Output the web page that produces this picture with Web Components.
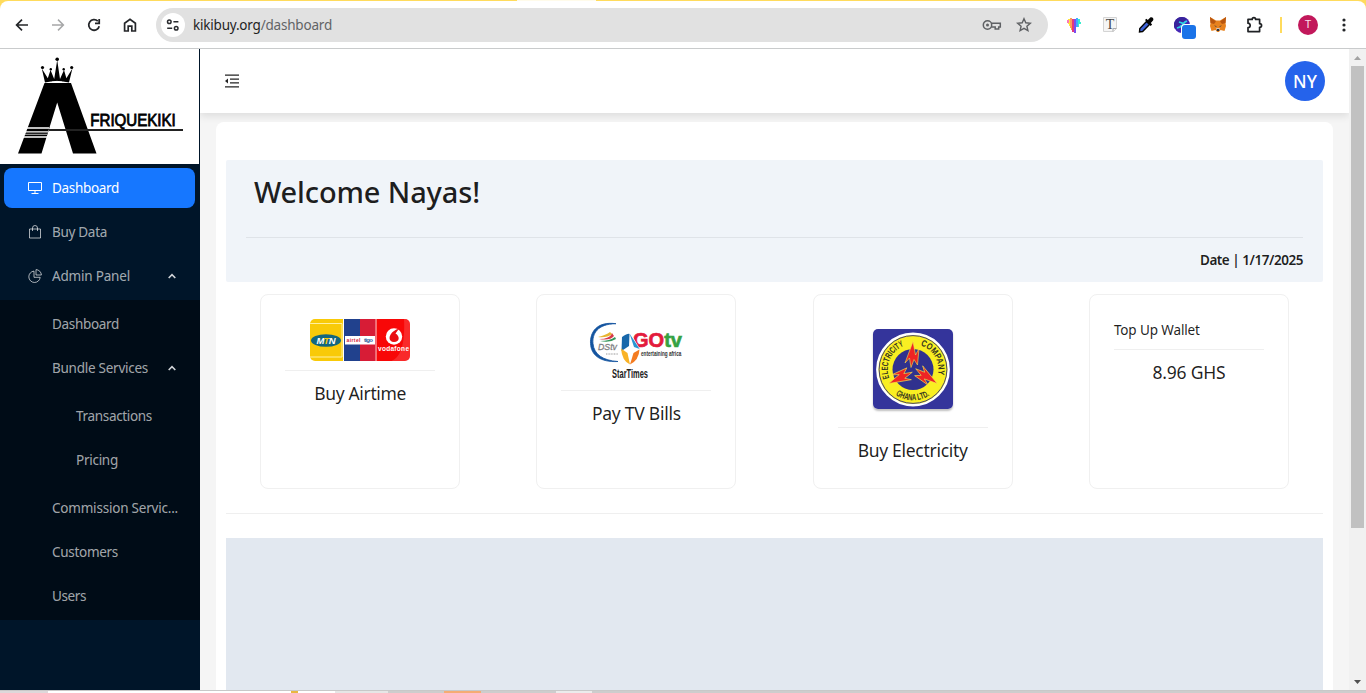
<!DOCTYPE html>
<html lang="en">
<head>
<meta charset="utf-8">
<title>Afriquekiki dashboard</title>
<style>
html,body{margin:0;height:100%;overflow:hidden}
body{font-family:"Noto Sans","Open Sans",sans-serif;font-size:13.5px;color:rgba(0,0,0,.88);background:#fff}
</style>
</head>
<body>
<app-window></app-window>
<script>
const define = (name, html, setup) => {
  const tpl = document.createElement('template');
  tpl.innerHTML = html;
  customElements.define(name, class extends HTMLElement {
    constructor() {
      super();
      this.attachShadow({mode: 'open'}).append(tpl.content.cloneNode(true));
    }
    connectedCallback() { if (setup) setup(this, this.shadowRoot); }
  });
};

/* A label whose tracking is adjusted so that it takes the width given in "w". */
define('fit-text', `<style>:host{display:inline-block;white-space:nowrap;line-height:1.5}span{display:inline-block}</style><span><slot></slot></span>`, (el, root) => {
  requestAnimationFrame(() => {
    const span = root.querySelector('span'), w = +el.getAttribute('w');
    if (!w) return;
    const gap = (w - span.getBoundingClientRect().width) / el.textContent.length;
    span.style.letterSpacing = gap + 'px';
  });
});

define('browser-bar', `
<style>
:host{display:block;height:49px;box-sizing:border-box;background:linear-gradient(90deg,#ffdb5c 517px,#fffbea 517px 596px,#ffdb5c 596px);padding-top:1px}
.bar{height:48px;box-sizing:border-box;background:#fff;border-radius:8px 8px 0 0;border-bottom:1px solid #c9cbcc;display:flex;align-items:center}
.nav{display:flex;width:156px;padding-left:4px;box-sizing:border-box}
.c{width:36px;display:flex;justify-content:center;align-items:center;flex:none}
.url{width:892px;height:34px;border-radius:17px;background:#e1e1e1;display:flex;align-items:center;box-sizing:border-box;padding:0 8px 0 5px;color:#1f1f1f;margin-right:8px}
.url fit-text{padding-top:2px}
.site{width:24px;height:24px;border-radius:50%;background:#fff;display:flex;align-items:center;justify-content:center;margin-right:8px}
.url .end{margin-left:auto;display:flex}.url .end div{width:32px;display:flex;justify-content:center}
.path{color:#626466}
.t{width:20px;height:20px;border-radius:50%;background:#c2185b;color:#f8dfe8;font:11px/20px Roboto,sans-serif;text-align:center}
.sep{width:18px;display:flex;justify-content:center}.sep i{width:2px;height:16px;background:#ffdb5c}
.badge{position:relative}.badge i{position:absolute;left:8px;top:8px;width:14px;height:14px;border-radius:3px;background:#1a73e8;box-shadow:0 0 0 1px #fff}
svg{display:block}
</style>
<div class="bar">
 <div class="nav">
  <div class="c"><svg width="16" height="16" fill="none" stroke="#242629" stroke-width="1.7"><path d="M14 8H3M8 2.6 2.6 8 8 13.4"/></svg></div>
  <div class="c"><svg width="16" height="16" fill="none" stroke="#a6a7a8" stroke-width="1.5"><path d="M2 8h11M8 2.6 13.4 8 8 13.4"/></svg></div>
  <div class="c"><svg width="16" height="16" fill="none" stroke="#242629" stroke-width="1.8"><path d="M13.2 9.2a5.3 5.3 0 1 1-1.4-5"/><path d="M9 6.4h4.2V2"/></svg></div>
  <div class="c"><svg width="16" height="16" fill="none" stroke="#242629" stroke-width="1.7"><path d="M2.6 14V6.2L8 2.2l5.4 4V14H9.8V9.2H6.2V14Z"/></svg></div>
 </div>
 <div class="url">
  <div class="site"><svg width="14" height="12" fill="none" stroke="#2a2c2f" stroke-width="1.5"><circle cx="3.3" cy="2.7" r="1.8"/><path d="M7.4 2.7h5M1.2 9.2h5"/><circle cx="10.2" cy="9.2" r="1.8"/></svg></div>
  <fit-text w="139">kikibuy.org<span class="path">/dashboard</span></fit-text>
  <div class="end">
   <div><svg width="20" height="16" fill="none" stroke="#5f6164" stroke-width="1.5"><circle cx="5.5" cy="8" r="4.2"/><path d="M9.3 6.2h9v3.7h-1.6v2h-3.5v-2H9.4"/><circle cx="5.5" cy="8" r="1.5" fill="#5f6164" stroke="none"/></svg></div>
   <div><svg width="16" height="16" fill="none" stroke="#5f6164" stroke-width="1.4"><path d="m8 1.7 1.8 4.1 4.5.4-3.4 3 1 4.4L8 11.3l-3.9 2.3 1-4.4-3.4-3 4.5-.4z"/></svg></div>
  </div>
 </div>
 <div class="c"><svg width="14" height="16"><path d="M1 2h3v7H2V7H1z" fill="#ffe23b"/><path d="M0 3h2v3H0z" fill="#ff77b9"/><path d="M3 1h2v10H3z" fill="#ff9a5c"/><path d="M5 2h2v13H5z" fill="#e4387d"/><path d="M7 2h2v14H7z" fill="#784ff0"/><path d="M9 1h2v9H9z" fill="#3fa9ff"/><path d="M11 2h2v3h1v2h-2v3h-1z" fill="#35edcf"/><path d="M4 9h1v4H4z" fill="#ffa23b"/></svg></div>
 <div class="c"><svg width="14" height="16"><path d="M.5.5h13v11l-3 3H.5z" fill="#f5f5f5" stroke="#d4d4d4"/><path d="M10 14.5v-3h3.5" fill="none" stroke="#aaa"/><text x="7" y="12" text-anchor="middle" font-family="Liberation Serif,serif" font-size="14" fill="#444">T</text></svg></div>
 <div class="c"><svg width="16" height="16"><path d="m8.5 4.5 3 3L4.6 14.5 1.5 15l.3-3.4z" fill="#3f63d8" stroke="#050505" stroke-width="1.4"/><path d="m7 3 1.4-1.2 1.4 1.3L12 .8c2-1.5 4.3.8 3 2.8L12.8 6l1.3 1.5L12.7 9z" fill="#050505"/></svg></div>
 <div class="c"><div class="badge"><svg width="16" height="16"><circle cx="8" cy="8" r="8" fill="#4527b5"/><path d="M8 0a8 8 0 0 0-7 12l12-10a8 8 0 0 0-5-2" fill="#38239b"/><path d="m3 11 3-1 5-5 2-1M5 5l3 1 2 3" fill="none" stroke="#2cd4e4" stroke-width="1.8"/></svg><i></i></div></div>
 <div class="c"><svg width="16" height="15"><path d="M0 0 6 3.4h4L16 0l-.5 6 .5 3-1.5 5-4-1-1.6 2H7.1l-1.6-2-4 1L0 9l.5-3z" fill="#e8821e"/><path d="m0 0 6 4.4L4 7 .5 6zM16 0l-6 4.4L12 7l3.5-1z" fill="#b9560f"/><path d="m6 11 1 3h2l1-3z" fill="#d7c1b3"/><path d="M4 8.5 6.3 9v1zM12 8.5 9.7 9v1zM7 12h2l.3 2H6.7z" fill="#233447"/></svg></div>
 <div class="c"><svg width="16" height="18" style="overflow:visible" fill="none" stroke="#1f2124" stroke-width="1.7" stroke-linejoin="round"><path d="M2 3.4h4.2c0-2.4 3.4-2.4 3.4 0h4v4.3c2.6 0 2.6 3.6 0 3.6v4.3H2v-4c2.9 0 2.9-4.4 0-4.4z"/></svg></div>
 <div class="sep"><i></i></div>
 <div class="c"><div class="t">T</div></div>
 <div class="c"><svg width="4" height="16" fill="#242629"><circle cx="2" cy="3" r="1.6"/><circle cx="2" cy="8" r="1.6"/><circle cx="2" cy="13" r="1.6"/></svg></div>
</div>`);

define('brand-logo', `
<style>:host{display:block;height:115px;width:199px;background:#fff}svg{display:block}</style>
<svg width="199" height="115" viewBox="0 0 199 115">
 <path d="M44.5 34H71L96.5 104.5H73L57.2 53.5 41.5 104.5H18z"/>
 <path d="M45 33.5 41.8 19.5l6 9.7L50.5 21l3.7 9L57.2 11l2.8 19 4-9 2.4 8.2 6-9.7L69 33.5q-12-2.5-24 0z"/>
 <circle cx="57.2" cy="10.3" r="1.8"/><circle cx="42.5" cy="18.5" r="1.6"/><circle cx="71.7" cy="18.5" r="1.6"/><circle cx="50.8" cy="20.3" r="1.2"/><circle cx="63.7" cy="20.3" r="1.2"/>
 <path d="M52 33q5-1.3 10 0" fill="none" stroke="#fff" stroke-width="1"/>
 <path d="M26 79h23M24 82.8h24M22 88h26" stroke="#fff" stroke-width="1.3"/><path d="M25 85.3h22" stroke="#fff" stroke-width=".7"/>
 <path d="M49 81h134" stroke="#222" stroke-width="1.8"/>
 <text x="90.3" y="77" font-family="Liberation Sans,sans-serif" font-size="16.5" stroke="#000" stroke-width=".8" textLength="85.5" lengthAdjust="spacingAndGlyphs">FRIQUEKIKI</text>
</svg>`);

define('menu-item', `
<style>
:host{display:flex;align-items:center;height:40px;padding-left:24px;box-sizing:border-box;border-radius:8px;color:rgba(255,255,255,.65)}
:host([active]){background:#1677ff;color:#fff}
:host([level="1"]){padding-left:48px}:host([level="2"]){padding-left:72px}
::slotted(svg){width:14px;height:14px;margin-right:10px;fill:none;stroke:currentColor}
.arrow{display:none;margin:0 19px 0 auto}:host([open]) .arrow{display:block}
</style><slot name="icon"></slot><slot></slot><svg class="arrow" width="8" height="6" fill="none" stroke="#d0d4d8" stroke-width="1.6"><path d="m.7 5 3.3-3.3L7.3 5"/></svg>`);

define('nav-sidebar', `
<style>
:host{display:flex;flex-direction:column;width:200px;flex:none;background:#001529}
.top,.sub,.in{display:flex;flex-direction:column}
menu-item{margin:4px 5px 0 4px}
.sub{background:#000c17;margin-top:4px;padding-bottom:4px}
.in{padding:4px 0}
</style>
<brand-logo></brand-logo>
<div class="top">
 <menu-item active><svg slot="icon" viewBox="0 0 14 14"><path d="M.5 1.5h13v8H.5zM7 9.5v3M3.5 12.5h7"/></svg><fit-text w="67">Dashboard</fit-text></menu-item>
 <menu-item><svg slot="icon" viewBox="0 0 14 14"><path d="M1.5 4h11v9h-11zM4.5 6V3a2.5 2.5 0 0 1 5 0v3"/></svg><fit-text w="55">Buy Data</fit-text></menu-item>
 <menu-item open><svg slot="icon" viewBox="0 0 14 14"><path d="M6 2.1a5.7 5.7 0 1 0 6.2 6.2H6z"/><path d="M8 .6V6h5.4A5.6 5.6 0 0 0 8 .6z"/></svg><fit-text w="78">Admin Panel</fit-text></menu-item>
</div>
<div class="sub">
 <menu-item level="1"><fit-text w="67">Dashboard</fit-text></menu-item>
 <menu-item level="1" open><fit-text w="96">Bundle Services</fit-text></menu-item>
 <div class="in">
  <menu-item level="2"><fit-text w="76">Transactions</fit-text></menu-item>
  <menu-item level="2"><fit-text w="42">Pricing</fit-text></menu-item>
 </div>
 <menu-item level="1"><fit-text w="126">Commission Servic...</fit-text></menu-item>
 <menu-item level="1"><fit-text w="66">Customers</fit-text></menu-item>
 <menu-item level="1"><fit-text w="34">Users</fit-text></menu-item>
</div>`);

define('top-bar', `
<style>
:host{display:flex;height:64px;flex:none;align-items:center;justify-content:space-between;padding:0 24px;background:#fff;box-shadow:0 3px 8px rgba(0,0,0,.1);box-sizing:border-box}
.av{width:40px;height:40px;border-radius:50%;background:#2563eb;color:#fff;text-align:center;font:500 17.5px/41px "Noto Sans",sans-serif}
svg{display:block}
</style>
<svg width="16" height="16" stroke="#242424" stroke-width="1.3"><path d="M1 2.2h14M6 6.1h9M6 9.9h9M1 13.8h14"/><path d="M1 8l3-2.4v4.8z" fill="#242424" stroke="none"/></svg>
<div class="av"><fit-text w="24" style="line-height:41px">NY</fit-text></div>`);

define('welcome-panel', `
<style>
:host{display:block;height:122px;box-sizing:border-box;background:#f0f4f9;border-radius:2px;padding:10px 20px 0}
h1{margin:0;padding-left:8px;height:67px;font-size:29px;font-weight:500;line-height:44px}
h1 fit-text{line-height:44px}
.date{border-top:1px solid #dfe3e8;text-align:right;font-weight:600;padding-top:11px;line-height:22px}
</style><h1><fit-text w="226">Welcome Nayas!</fit-text></h1><div class="date"><fit-text w="103">Date | 1/17/2025</fit-text></div>`);

define('service-card', `
<style>
:host{display:block;width:200px;height:195px;box-sizing:border-box;border:1px solid #f0f0f0;border-radius:8px;padding:24px;background:#fff}
.head{display:flex;justify-content:center}:host([plain]) .head{justify-content:flex-start}
.body{border-top:1px solid #efefef;margin-top:8.5px;padding-top:8px;text-align:center;font-size:17.5px;line-height:28px}
:host([plain]) .body{margin-top:8px}
</style><div class="head"><slot name="head"></slot></div><div class="body"><slot></slot></div>`);

define('airtime-art', `<style>:host{display:block}svg{display:block}</style>
<svg width="100" height="42" viewBox="0 0 100 42"><defs><clipPath id="r"><rect width="100" height="42" rx="5"/></clipPath></defs>
<g clip-path="url(#r)" font-family="Liberation Sans,sans-serif" font-weight="700"><rect width="34" height="43" fill="#f9ca08"/><path d="M0 4.5h32V38H0" fill="none" stroke="#fff0a0"/><path d="M33.5 0v43" stroke="#fff"/>
<ellipse cx="16" cy="21.5" rx="15" ry="6.3" fill="#12677f"/><text x="16" y="25" text-anchor="middle" font-size="9.5" font-style="italic" fill="#fff" textLength="19">M<tspan fill="#f9ca08">T</tspan>N</text>
<path d="M34 0h16v43H34z" fill="#21418d"/><path d="M50 0h16v43H50z" fill="#d71c36"/><path d="M35 17h30v8.5H35z" fill="#fff"/><text x="36.5" y="22.5" font-size="5" fill="#d02238" textLength="14">airtel</text><text x="54" y="23" font-size="6" fill="#34589a" textLength="9">tigo</text><path d="M66 0v43" stroke="#fbb"/>
<path d="M66.5 0H100v43H66.5z" fill="#f80707"/><path d="M78 43Q96 40 94 0h6v43z" fill="#fff" opacity=".14"/><circle cx="84" cy="17.5" r="8.2" fill="#fff"/><path d="M84 12c-6 4-6 11 0 11s6-6 1.5-8.5L89 9.8Q86 10 84 12" fill="#e90e12"/><text x="68" y="32.2" font-size="6.5" fill="#fff" textLength="31">vodafone</text></g></svg>`);

define('tv-art', `<style>:host{display:block}svg{display:block;overflow:visible}</style>
<svg width="100" height="62" viewBox="0 0 100 62" font-family="Liberation Sans,sans-serif">
<path d="M30 4.7C10 2 4 14 4.5 24.5 5 36 14 43.5 32 42.5c-15-1-24-7-25-18C6.2 15 11 5 30 4.7z" fill="#14549f" stroke="#14549f" stroke-width=".8"/>
<path d="M13 20Q24 20 26 14l2 3q-4 5-15 3" fill="#d8394a"/><path d="M14 22q10 0 15-4l1 2q-6 4-16 2" fill="#33965a"/><path d="M12 18q8-2 12-5l2 2q-5 4-14 3" fill="#e7b533"/>
<text x="12" y="31" font-size="9.5" font-style="italic" fill="#8b8b91" stroke="#777" stroke-width=".3" textLength="19" lengthAdjust="spacingAndGlyphs">DStv</text><path d="M20 35h12" stroke="#999" stroke-dasharray="1 .6"/>
<text x="47" y="28" font-size="21" font-weight="700" textLength="49" lengthAdjust="spacingAndGlyphs" stroke-width=".7"><tspan fill="#e31b3c" stroke="#e31b3c">GO</tspan><tspan fill="#35a243" stroke="#35a243">tv</tspan></text>
<path d="M44.5 14 54 30 44 46 35 31z" fill="#fff"/><path d="M36 18q6-4 7.5-3L43 27 35.5 32z" fill="#1767aa"/><path d="M43.5 14.5 53.7 30 48 28z" fill="#2c95d3"/><path d="M35 29.5 41.5 34 44 45.5Q36 42 35 29.5z" fill="#f9b225"/><path d="M44 45.5 47.5 34 53.5 30.5Q53 41 44 45.5z" fill="#f47b20"/>
<text transform="translate(55 37) scale(.72 1)" font-size="7.2" font-weight="700" fill="#333" textLength="56" lengthAdjust="spacingAndGlyphs">entertaining africa</text>
<text transform="translate(26 58.5) scale(.6 1)" font-size="13.5" font-weight="700" fill="#222" textLength="60" lengthAdjust="spacingAndGlyphs">StarTimes</text></svg>`);

define('power-art', `<style>:host{display:block;padding:10px 0 9px}svg{display:block;border-radius:5px;box-shadow:0 2px 2px rgba(0,0,0,.25)}</style>
<svg width="80" height="80" viewBox="0 0 80 80"><rect width="80" height="80" fill="#34349b"/><circle cx="40" cy="40.5" r="35.7" fill="#f9ef22" stroke="#fff" stroke-width="2.4"/><circle cx="40" cy="40.5" r="33.9" fill="none" stroke="#323277" stroke-width=".9"/><circle cx="40" cy="40.5" r="20.5" fill="#30318e"/>
<defs><path id="b" d="M40 12.5 42.5 26 46 19.5 44.5 36 41 30.5 38 38.5 36.5 29 32 34z"/><path id="l" d="M16.6 50A25.2 25.2 0 0 1 36 15.6"/><path id="rr" d="M47.5 16.4A25.2 25.2 0 0 1 64.3 47.4"/><path id="g" d="M16 59.9A31 31 0 0 0 64 59.9"/></defs>
<g fill="#ee2424" stroke="#f7e84a" stroke-width=".6"><use href="#b"/><use href="#b" transform="rotate(120 40 40.5)"/><use href="#b" transform="rotate(240 40 40.5)"/></g>
<g font-family="Liberation Sans,sans-serif" font-weight="700" font-size="9" fill="#34341f"><text textLength="39" lengthAdjust="spacingAndGlyphs"><textPath href="#l" startOffset="1">ELECTRICITY</textPath></text><text textLength="37" lengthAdjust="spacingAndGlyphs"><textPath href="#rr" startOffset="0">COMPANY</textPath></text><text textLength="36" lengthAdjust="spacingAndGlyphs"><textPath href="#g" startOffset="9">GHANA LTD.</textPath></text></g></svg>`);

define('page-scrollbar', `
<style>:host{display:flex;flex-direction:column;align-items:center;width:17px;flex:none;background:#f1f1f1}
svg{display:block;flex:none}i{display:block;width:13px;height:462px;background:#c1c1c1}.d{margin-top:auto}</style>
<svg width="17" height="17"><path d="M5 11h7L8.5 7z" fill="#a3a3a3"/></svg><i></i><svg class="d" width="17" height="17"><path d="M5 7h7l-3.5 4z" fill="#505050"/></svg>`);

define('dashboard-page', `
<style>
:host{display:flex;flex-direction:column;flex:1;min-width:0;background:#f5f5f5;overflow:hidden}
main{margin:9px 16px 0;flex:1;background:#fff;border-radius:8px 8px 0 0;padding:38px 10px 0;display:flex;flex-direction:column;position:relative}
.cards{display:grid;grid-template-columns:repeat(4,1fr);justify-items:center;margin:12px -4px 24px;flex:none}
hr{border:0;border-top:1px solid #efefef;margin:0 0 24px;width:100%}
.block{background:#e2e8f0;flex:1}
</style>
<top-bar></top-bar>
<main>
 <welcome-panel></welcome-panel>
 <div class="cards">
  <service-card><airtime-art slot="head"></airtime-art><fit-text w="92">Buy Airtime</fit-text></service-card>
  <service-card><tv-art slot="head"></tv-art><fit-text w="89">Pay TV Bills</fit-text></service-card>
  <service-card><power-art slot="head"></power-art><fit-text w="110">Buy Electricity</fit-text></service-card>
  <service-card plain><fit-text slot="head" w="86" style="line-height:22px">Top Up Wallet</fit-text><fit-text w="73">8.96 GHS</fit-text></service-card>
 </div>
 <hr>
 <div class="block"></div>
</main>`);

define('bottom-edge', `
<style>:host{display:block;height:3px;flex:none;box-sizing:border-box;border-top:1px solid #c8c8c8;background:linear-gradient(90deg,#ddd8da 48px,#fff 48px 291px,#e9b840 291px 298px,#fff 298px 335px,#e6e6e6 335px 388px,#cdcdcd 388px 444px,#f5ac73 444px 481px,#cdcdcd 481px 556px,#ececec 556px 592px,#cdcdcd 592px)}</style>`);

define('app-window', `
<style>:host{display:flex;flex-direction:column;width:1366px;height:693px;overflow:hidden}.row{display:flex;flex:1;min-height:0}</style>
<browser-bar></browser-bar>
<div class="row"><nav-sidebar></nav-sidebar><dashboard-page></dashboard-page><page-scrollbar></page-scrollbar></div>
<bottom-edge></bottom-edge>`);
</script>
</body>
</html>
